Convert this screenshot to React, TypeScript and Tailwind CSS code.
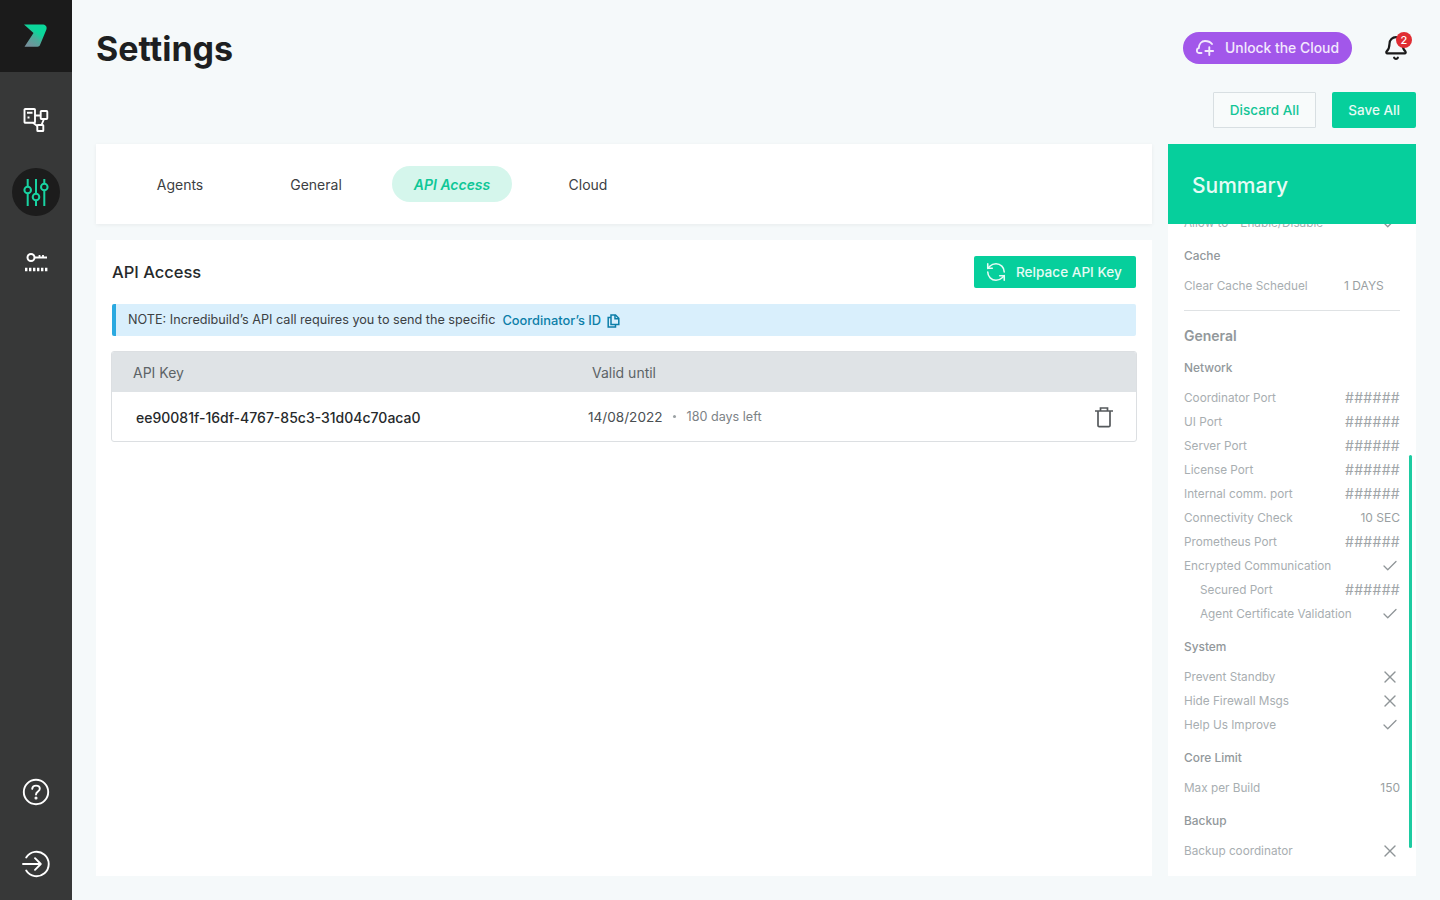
import { Bell, Check, RefreshCcw, X } from 'lucide-react';

type RowProps = { label: string; value?: string; icon?: 'check' | 'x'; indent?: boolean };

function SummaryRow({ label, value, icon, indent }: RowProps) {
    return (
        <div className={`flex h-6 items-center justify-between text-[11.75px] text-[#a8aeb1] ${indent ? 'pl-4' : ''}`}>
            <span className="pt-[2px]">{label}</span>
            {value && (
                <span className={value === '######' ? 'mb-[2px] text-[14px] tracking-[0.3px] text-[#a0a5a8]' : 'text-[12px] text-[#9a9fa2]'}>
                    {value}
                </span>
            )}
            {icon === 'check' && <Check size={18} strokeWidth={1.7} className="mr-px text-[#8f9598]" />}
            {icon === 'x' && <X size={20} strokeWidth={1.6} className="text-[#8f9598]" />}
        </div>
    );
}

function GroupLabel({ children }: { children: string }) {
    return <div className="mt-[9px] flex h-[30px] items-start pt-[3px] text-[11.9px] font-medium leading-[18px] text-[#92989b]">{children}</div>;
}

function SideIcon({ children, active }: { children: React.ReactNode; active?: boolean }) {
    return (
        <div className={`flex h-12 w-12 items-center justify-center rounded-full ${active ? 'bg-[#1c1c1c]' : ''}`}>
            {children}
        </div>
    );
}

function Sidebar() {
    return (
        <aside className="flex h-[900px] w-[72px] shrink-0 flex-col items-center bg-[#373838]">
            <div className="flex h-[72px] w-full items-center justify-center bg-[#1b1b1b]">
                <svg width="72" height="72" viewBox="0 0 72 72">
                    <defs>
                        <linearGradient id="logo" x1="0.8" y1="0.1" x2="0.2" y2="0.95">
                            <stop offset="0.3" stopColor="#0bd79b" />
                            <stop offset="0.6" stopColor="#4fa99a" />
                            <stop offset="1" stopColor="#75909b" />
                        </linearGradient>
                    </defs>
                    <path d="M24 24.5H42C45.5 24.5 47.4 26.6 46.4 29.4L40 45C39.5 46.2 38.8 46.7 37.5 46.7H24.5L33.5 33Z" fill="url(#logo)" />
                </svg>
            </div>
            <div className="mt-6">
                <SideIcon>
                    <svg width="26" height="26" viewBox="0 0 26 26" fill="none" stroke="#fff" strokeWidth="1.9">
                        <rect x="1.5" y="2" width="10.5" height="13.7" rx="0.8" />
                        <path d="M4 5.7h5.5M4.5 10.5h2" />
                        <rect x="17.7" y="4" width="6.6" height="8" rx="0.8" />
                        <rect x="14.3" y="18" width="6" height="6" rx="0.6" />
                        <path d="M12 8.5H17.7M10 15.7L14.3 19M21 12L18.5 18" />
                    </svg>
                </SideIcon>
            </div>
            <div className="mt-6">
                <SideIcon active>
                    <svg width="26" height="36" viewBox="0 0 26 36" fill="none" stroke="#19d3a2" strokeWidth="2">
                        <path d="M4.7 5v8M4.7 19.4V32M13 5v15M13 26.4V32M21.3 5v5M21.3 16.4V32" />
                        <circle cx="4.7" cy="16" r="3.3" />
                        <circle cx="13" cy="23" r="3.3" />
                        <circle cx="21.3" cy="13" r="3.3" />
                    </svg>
                </SideIcon>
            </div>
            <div className="mt-[23px]">
                <SideIcon>
                    <svg width="26" height="26" viewBox="0 0 26 26" fill="none" stroke="#fff">
                        <circle cx="8" cy="7.5" r="3.5" strokeWidth="2" />
                        <path d="M11.5 7.5H24M16.5 7.5V5M20 7.5V5" strokeWidth="1.8" />
                        <path d="M2 19.5H24.7" strokeWidth="3.5" strokeDasharray="2.4 1.6" />
                    </svg>
                </SideIcon>
            </div>
            <div className="mt-auto">
                <SideIcon>
                    <svg width="28" height="28" viewBox="0 0 28 28" fill="none" stroke="#fff" strokeWidth="1.9">
                        <circle cx="14" cy="14" r="12.2" />
                        <path d="M10.2 10.8C10.4 8.7 12 7.6 14 7.6C16.2 7.6 17.8 9 17.8 10.8C17.8 13.5 14 13.6 14 16.5" strokeLinecap="round" />
                        <circle cx="14" cy="20" r="0.6" fill="#fff" />
                    </svg>
                </SideIcon>
            </div>
            <div className="mb-3 mt-6">
                <SideIcon>
                    <svg width="28" height="28" viewBox="0 0 28 28" fill="none" stroke="#fff" strokeWidth="1.9">
                        <path d="M4.2 7.5A12.2 12.2 0 1 1 4.2 20.5" strokeLinecap="round" />
                        <path d="M1 14H18.5M13 8.2L18.8 14L13 19.8" strokeLinecap="round" strokeLinejoin="round" />
                    </svg>
                </SideIcon>
            </div>
        </aside>
    );
}

function Tabs() {
    const tabs = ['Agents', 'General', 'API Access', 'Cloud'];
    return (
        <div className="flex h-20 items-center gap-4 bg-white px-6 shadow-[0_1px_4px_rgba(0,0,0,0.06)]">
            {tabs.map(tab => (
                <div
                    key={tab}
                    className={`flex h-9 w-[120px] items-center justify-center rounded-full text-[14px] ${
                        tab === 'API Access' ? 'bg-[#d5f6ec] font-semibold italic text-[#0fc797]' : 'text-[#3c4043]'
                    }`}
                >
                    {tab}
                </div>
            ))}
        </div>
    );
}

function ApiPanel() {
    return (
        <div className="mt-4 flex-1 bg-white p-4">
            <div className="flex h-8 items-center justify-between">
                <h2 className="pt-px text-[16.5px] font-medium text-[#26292b]">API Access</h2>
                <button className="flex h-8 w-[162px] items-center gap-[9px] rounded-[2px] bg-[#06cf9c] pl-[11px] text-[13.6px] font-medium text-[#e6fbf5]">
                    <RefreshCcw size={22} strokeWidth={1.7} />
                    <span className="pt-px">Relpace API Key</span>
                </button>
            </div>
            <div className="mt-4 flex h-8 items-center rounded-[2px] border-l-4 border-[#2aa9e0] bg-[#d9effc] pl-3 pt-px text-[12.65px] text-[#3c4043]">
                NOTE: Incredibuild’s API call requires you to send the specific
                <span className="ml-[7px] text-[12.85px] font-medium text-[#0c7ea8]">Coordinator’s ID</span>
                <svg className="ml-[6px]" width="13" height="14" viewBox="0 0 13 14" fill="none" stroke="#0c7ea8" strokeWidth="1.5">
                    <path d="M4 1H8.5L11.8 4.2V10.5H4Z" />
                    <path d="M8 1V4.7H11.8" />
                    <path d="M4 3.5H1.2V13H8.5V10.5" />
                </svg>
            </div>
            <div className="-mx-px mt-[15px] overflow-hidden rounded-[3px] border border-[#dcdfe2]">
                <div className="flex h-10 items-center bg-[#dfe3e6] text-[14px] text-[#5d6367]">
                    <span className="w-[480px] pl-[21px]">API Key</span>
                    <span>Valid until</span>
                </div>
                <div className="flex h-[49px] items-center">
                    <span className="w-[476px] pl-6 pt-px text-[14px] font-medium text-[#26292b]">ee90081f-16df-4767-85c3-31d04c70aca0</span>
                    <span className="pt-[2px] text-[13.6px] text-[#4a4f52]">14/08/2022</span>
                    <span className="ml-[10px] mr-[11px] h-[3px] w-[3px] rounded-full bg-[#9aa0a3]" />
                    <span className="pt-[2px] text-[12.6px] text-[#7c8286]">180 days left</span>
                    <svg className="ml-auto mr-[21px]" width="22" height="22" viewBox="0 0 22 22" fill="none" stroke="#55595c" strokeWidth="1.7">
                        <path d="M2 5H20M7.5 5V2H14.5V5" />
                        <path d="M5 5V19.5A1.2 1.2 0 0 0 6.2 20.7H15.8A1.2 1.2 0 0 0 17 19.5V5" />
                    </svg>
                </div>
            </div>
        </div>
    );
}

function Summary() {
    return (
        <div className="relative ml-4 flex h-[732px] w-[248px] shrink-0 flex-col overflow-hidden bg-white">
            <div className="relative z-10 flex h-20 shrink-0 items-center bg-[#06cf9c] pl-6 pt-[3px] text-[21px] font-medium text-[#e6fbf5]">
                Summary
            </div>
            <div className="-mt-[13px] px-4">
                <SummaryRow label="Allow to - Enable/Disable" icon="check" />
                <GroupLabel>Cache</GroupLabel>
                <div className="flex h-6 items-center text-[11.75px] text-[#a8aeb1]">
                    <span className="w-40 pt-[2px]">Clear Cache Scheduel</span>
                    <span className="text-[12px] text-[#9a9fa2]">1 DAYS</span>
                </div>
                <div className="mt-[12px] border-t border-[#dfe2e4]" />
                <div className="mt-4 text-[14px] font-semibold leading-[18px] text-[#92989b]">General</div>
                <div className="pt-[2px]">
                    <GroupLabel>Network</GroupLabel>
                </div>
                <SummaryRow label="Coordinator Port" value="######" />
                <SummaryRow label="UI Port" value="######" />
                <SummaryRow label="Server Port" value="######" />
                <SummaryRow label="License Port" value="######" />
                <SummaryRow label="Internal comm. port" value="######" />
                <SummaryRow label="Connectivity Check" value="10 SEC" />
                <SummaryRow label="Prometheus Port" value="######" />
                <SummaryRow label="Encrypted Communication" icon="check" />
                <SummaryRow label="Secured Port" value="######" indent />
                <SummaryRow label="Agent Certificate Validation" icon="check" indent />
                <GroupLabel>System</GroupLabel>
                <SummaryRow label="Prevent Standby" icon="x" />
                <SummaryRow label="Hide Firewall Msgs" icon="x" />
                <SummaryRow label="Help Us Improve" icon="check" />
                <GroupLabel>Core Limit</GroupLabel>
                <SummaryRow label="Max per Build" value="150" />
                <GroupLabel>Backup</GroupLabel>
                <SummaryRow label="Backup coordinator" icon="x" />
            </div>
            <div className="absolute left-[241px] top-[311px] h-[393px] w-[3px] rounded-full bg-[#1dcba1]" />
        </div>
    );
}

export default function App() {
    return (
        <div className="flex h-[900px] w-[1440px] overflow-hidden bg-[#f5f9fa] font-['Inter',sans-serif]">
            <Sidebar />
            <main className="flex-1 px-6">
                <header className="flex h-[92px] items-start justify-between">
                    <h1 className="mt-[27px] text-[34px] font-bold leading-[44px] text-[#1d1f21]">Settings</h1>
                    <div className="mt-8 flex items-center">
                        <button className="flex h-8 w-[169px] items-center gap-[11px] rounded-full bg-[#a257ea] pl-[13px] text-[13.9px] font-medium text-[#f3e9fd]">
                            <svg width="18" height="16" viewBox="0 0 18 16" fill="none" stroke="currentColor" strokeWidth="1.9" strokeLinecap="round">
                                <path d="M5.5 13H3C1.6 13 0.9 11.8 0.9 10.4C0.9 9.2 1.6 8.2 2.8 8C3 4 5.5 1 9 1C11.8 1 14.5 2 16 4" />
                                <path d="M13.3 7.2V15M9.4 11H17.2" />
                            </svg>
                            <span className="pt-px">Unlock the Cloud</span>
                        </button>
                        <div className="relative ml-[31px] mr-[7px]">
                            <Bell size={26} strokeWidth={2} className="text-[#1a1a1a]" />
                            <span className="absolute -right-[3px] -top-[3px] flex h-4 w-4 items-center justify-center rounded-full bg-[#e02d33] text-[11px] font-medium text-white">2</span>
                        </div>
                    </div>
                </header>
                <div className="flex h-9 justify-end gap-4">
                    <button className="h-9 w-[103px] rounded-[1px] border border-[#d8dfe2] bg-[#f8fbfb] pt-px text-[13.5px] font-medium text-[#12c596]">Discard All</button>
                    <button className="h-9 w-[84px] rounded-[2px] bg-[#06cf9c] pt-px text-[13.5px] font-medium text-[#e6fbf5]">Save All</button>
                </div>
                <div className="mt-4 flex h-[732px]">
                    <div className="flex w-[1056px] shrink-0 flex-col">
                        <Tabs />
                        <ApiPanel />
                    </div>
                    <Summary />
                </div>
            </main>
        </div>
    );
}
